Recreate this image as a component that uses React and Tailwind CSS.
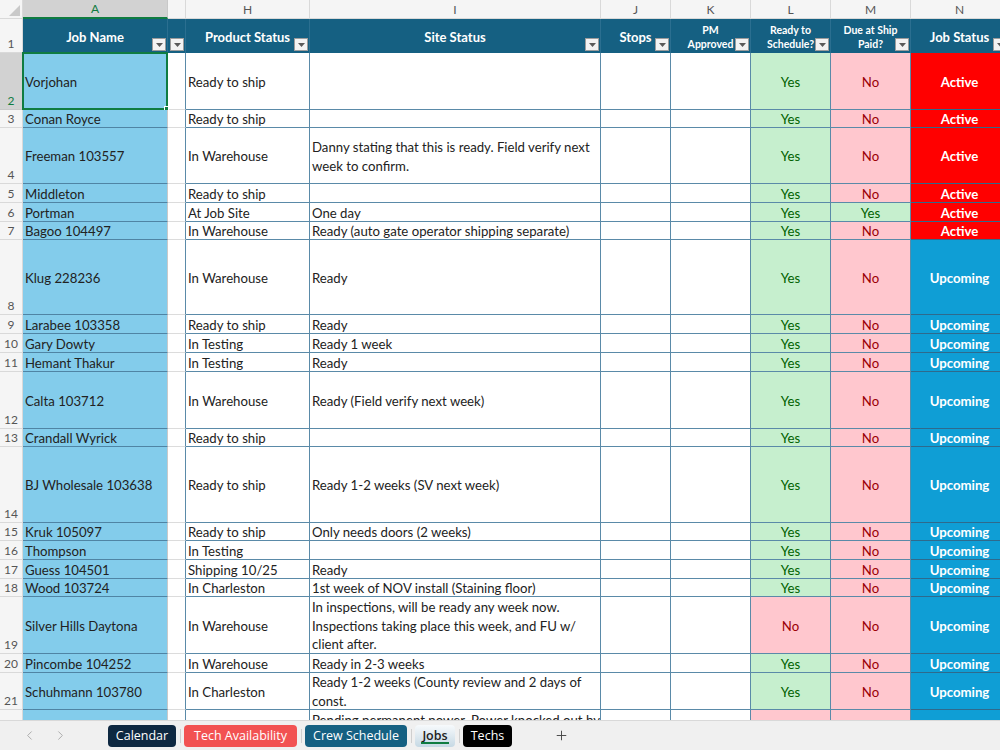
import { ChevronLeft, ChevronRight, Plus } from 'lucide-react';

// column template: row numbers, A, G (narrow), H, I, J, K, L, M, N
const GRID = 'grid grid-rows-[minmax(0,1fr)] grid-cols-[23px_145px_18px_124px_291px_70px_80px_80px_80px_98px]';

const rows = [
  { n: 2, h: 'h-[57px]', name: 'Vorjohan', prod: 'Ready to ship', site: [], ready: 'Yes', paid: 'No', status: 'Active' },
  { n: 3, h: 'h-[18px]', name: 'Conan Royce', prod: 'Ready to ship', site: [], ready: 'Yes', paid: 'No', status: 'Active' },
  {
    n: 4, h: 'h-[56px]', name: 'Freeman 103557', prod: 'In Warehouse',
    site: ['Danny stating that this is ready. Field verify next', 'week to confirm.'],
    ready: 'Yes', paid: 'No', status: 'Active',
  },
  { n: 5, h: 'h-[19px]', name: 'Middleton', prod: 'Ready to ship', site: [], ready: 'Yes', paid: 'No', status: 'Active' },
  { n: 6, h: 'h-[19px]', name: 'Portman', prod: 'At Job Site', site: ['One day'], ready: 'Yes', paid: 'Yes', status: 'Active' },
  { n: 7, h: 'h-[18px]', name: 'Bagoo 104497', prod: 'In Warehouse', site: ['Ready (auto gate operator shipping separate)'], ready: 'Yes', paid: 'No', status: 'Active' },
  { n: 8, h: 'h-[75px]', name: 'Klug 228236', prod: 'In Warehouse', site: ['Ready'], ready: 'Yes', paid: 'No', status: 'Upcoming' },
  { n: 9, h: 'h-[19px]', name: 'Larabee 103358', prod: 'Ready to ship', site: ['Ready'], ready: 'Yes', paid: 'No', status: 'Upcoming' },
  { n: 10, h: 'h-[19px]', name: 'Gary Dowty', prod: 'In Testing', site: ['Ready 1 week'], ready: 'Yes', paid: 'No', status: 'Upcoming' },
  { n: 11, h: 'h-[19px]', name: 'Hemant Thakur', prod: 'In Testing', site: ['Ready'], ready: 'Yes', paid: 'No', status: 'Upcoming' },
  { n: 12, h: 'h-[57px]', name: 'Calta 103712', prod: 'In Warehouse', site: ['Ready (Field verify next week)'], ready: 'Yes', paid: 'No', status: 'Upcoming' },
  { n: 13, h: 'h-[18px]', name: 'Crandall Wyrick', prod: 'Ready to ship', site: [], ready: 'Yes', paid: 'No', status: 'Upcoming' },
  { n: 14, h: 'h-[76px]', name: 'BJ Wholesale 103638', prod: 'Ready to ship', site: ['Ready 1-2 weeks (SV next week)'], ready: 'Yes', paid: 'No', status: 'Upcoming' },
  { n: 15, h: 'h-[18px]', name: 'Kruk 105097', prod: 'Ready to ship', site: ['Only needs doors (2 weeks)'], ready: 'Yes', paid: 'No', status: 'Upcoming' },
  { n: 16, h: 'h-[19px]', name: 'Thompson', prod: 'In Testing', site: [], ready: 'Yes', paid: 'No', status: 'Upcoming' },
  { n: 17, h: 'h-[19px]', name: 'Guess 104501', prod: 'Shipping 10/25', site: ['Ready'], ready: 'Yes', paid: 'No', status: 'Upcoming' },
  { n: 18, h: 'h-[18px]', name: 'Wood 103724', prod: 'In Charleston', site: ['1st week of NOV install (Staining floor)'], ready: 'Yes', paid: 'No', status: 'Upcoming' },
  {
    n: 19, h: 'h-[57px]', name: 'Silver Hills Daytona', prod: 'In Warehouse',
    site: ['In inspections, will be ready any week now.', 'Inspections taking place this week, and FU w/', 'client after.'],
    ready: 'No', paid: 'No', status: 'Upcoming',
  },
  { n: 20, h: 'h-[19px]', name: 'Pincombe 104252', prod: 'In Warehouse', site: ['Ready in 2-3 weeks'], ready: 'Yes', paid: 'No', status: 'Upcoming' },
  {
    n: 21, h: 'h-[37px]', name: 'Schuhmann 103780', prod: 'In Charleston',
    site: ['Ready 1-2 weeks (County review and 2 days of', 'const.'],
    ready: 'Yes', paid: 'No', status: 'Upcoming',
  },
  {
    n: 22, h: 'h-[75px]', name: '', prod: '', top: true,
    site: ['Pending permanent power. Power knocked out by'],
    ready: 'No', paid: '', status: 'Upcoming', blank: true,
  },
];

function FilterButton() {
  return (
    <div className="absolute right-[1px] bottom-[2px] w-[14px] h-[13px] bg-[#f3f3f3] border border-[#9c9c9c] flex items-center justify-center">
      <svg width="7" height="4" viewBox="0 0 7 4">
        <path d="M0 0h7L3.5 4z" fill="#5a5a5a" />
      </svg>
    </div>
  );
}

function ColLetter({ label, active }) {
  return (
    <div
      className={
        active
          ? 'h-[19px] flex items-center justify-center bg-[#d2d2d2] text-[#107c41] border-r border-[#c8c8c8] border-b-2 border-b-[#107c41]'
          : 'h-[19px] flex items-center justify-center bg-[#f5f5f5] text-[#555] border-r border-b border-[#d9d9d9]'
      }
    >
      {label}
    </div>
  );
}

function HeadCell({ children, small }) {
  return (
    <div
      className={
        small
          ? 'relative h-[34px] pt-[1px] bg-[#156082] text-white font-bold text-[10.5px] leading-[14px] flex flex-col items-center justify-center text-center border-r border-[#2b6f90]'
          : 'relative h-[34px] pt-[3px] bg-[#156082] text-white font-bold text-[13px] flex items-center justify-center border-r border-[#2b6f90]'
      }
    >
      {children}
      <FilterButton />
    </div>
  );
}

function Flag({ value }) {
  if (value === 'Yes') {
    return <div className="flex items-center justify-center pt-[2px] bg-[#c6efce] text-[#006100] border-r border-b border-[#5a8aa8]">Yes</div>;
  }
  if (value === 'No') {
    return <div className="flex items-center justify-center pt-[2px] bg-[#ffc7ce] text-[#9c0006] border-r border-b border-[#5a8aa8]">No</div>;
  }
  return <div className="bg-[#ffc7ce] border-r border-b border-[#5a8aa8]" />;
}

function StatusCell({ value, blank }) {
  const tone = value === 'Active' ? 'bg-[#ff0000]' : 'bg-[#0f9ed5]';
  return (
    <div className={`flex items-center justify-center pt-[2px] text-white font-bold border-r border-b border-[#2f6a8c] ${tone}`}>
      {blank ? '' : value}
    </div>
  );
}

function DataRow({ row }) {
  const selected = row.n === 2;
  return (
    <div className={`${GRID} ${row.h}`}>
      <div
        className={
          selected
            ? 'flex items-end justify-center bg-[#d2d2d2] text-[#107c41] text-[12px] border-r border-b border-[#c8c8c8] overflow-hidden'
            : 'flex items-end justify-center bg-[#f5f5f5] text-[#555] text-[12px] border-r border-b border-[#d9d9d9] overflow-hidden'
        }
      >
        {row.blank ? '' : row.n}
      </div>
      <div className="relative flex items-center pl-[2px] pt-[2px] bg-[#83cceb] border-r border-r-[#c9c9c9] border-b border-b-[#4f84a4] whitespace-nowrap">
        {row.name}
        {selected && (
          <div className="absolute -inset-[1px] border-2 border-[#107c41]">
            <div className="absolute -right-[3px] -bottom-[3px] w-[5px] h-[5px] bg-[#107c41] border border-white" />
          </div>
        )}
      </div>
      <div className="bg-white border-r border-r-[#5a8aa8] border-b border-b-[#dcdcdc]" />
      <div className="flex items-center pl-[2px] pt-[2px] bg-white border-r border-b border-[#5a8aa8] whitespace-nowrap overflow-hidden">{row.prod}</div>
      <div
        className={`flex flex-col pl-[2px] bg-white border-r border-b border-[#5a8aa8] whitespace-nowrap leading-[18.7px] overflow-hidden ${
          row.top ? 'justify-start pt-[1px]' : 'justify-center pt-[2px]'
        }`}
      >
        {row.site.map((line) => (
          <span key={line}>{line}</span>
        ))}
      </div>
      <div className="bg-white border-r border-b border-[#5a8aa8]" />
      <div className="bg-white border-r border-b border-[#5a8aa8]" />
      <Flag value={row.blank ? '' : row.ready} />
      <Flag value={row.paid} />
      <StatusCell value={row.status} blank={row.blank} />
    </div>
  );
}

function SheetTab({ label, className, active }) {
  return (
    <div className={`relative h-[22px] rounded-[4px] flex items-center justify-center ${className}`}>
      {label}
      {active && <div className="absolute bottom-[3px] left-1/2 -translate-x-1/2 w-[28px] h-[2px] bg-[#107c41]" />}
    </div>
  );
}

function Divider() {
  return <div className="ml-[4px] mr-[3px] w-px h-[14px] bg-[#cfcfcf]" />;
}

export default function App() {
  return (
    <div className="w-[1000px] h-[750px] flex flex-col overflow-hidden bg-white font-['Lato',sans-serif] text-[13.2px] leading-[17px] text-[#222]">
      <div className="flex-1 overflow-hidden">
        {/* column letters */}
        <div className={`${GRID} h-[19px] text-[12px]`}>
          <div className="relative h-[19px] bg-[#f5f5f5] border-r border-b border-[#d9d9d9]">
            <div className="absolute right-[2px] bottom-[2px] w-0 h-0 border-l-[11px] border-l-transparent border-b-[11px] border-b-[#c9c9c9]" />
          </div>
          <ColLetter label="A" active />
          <ColLetter label="" />
          <ColLetter label="H" />
          <ColLetter label="I" />
          <ColLetter label="J" />
          <ColLetter label="K" />
          <ColLetter label="L" />
          <ColLetter label="M" />
          <ColLetter label="N" />
        </div>

        {/* table header row */}
        <div className={`${GRID} h-[34px]`}>
          <div className="h-[34px] flex items-end justify-center bg-[#f5f5f5] text-[#555] text-[12px] border-r border-b border-[#d9d9d9]">1</div>
          <HeadCell>Job Name</HeadCell>
          <HeadCell />
          <HeadCell>Product Status</HeadCell>
          <HeadCell>Site Status</HeadCell>
          <HeadCell>Stops</HeadCell>
          <HeadCell small>
            <span>PM</span>
            <span>Approved</span>
          </HeadCell>
          <HeadCell small>
            <span>Ready to</span>
            <span>Schedule?</span>
          </HeadCell>
          <HeadCell small>
            <span>Due at Ship</span>
            <span>Paid?</span>
          </HeadCell>
          <HeadCell>Job Status</HeadCell>
        </div>

        {rows.map((row) => (
          <DataRow key={row.n} row={row} />
        ))}
      </div>

      {/* sheet tabs */}
      <div className="h-[30px] shrink-0 flex items-center bg-[#f0f0f0] border-t border-[#d9d9d9] font-['Open_Sans',sans-serif] text-[12.5px]">
        <div className="w-[108px] flex items-center pl-[22px] gap-[16px] text-[#a8a8a8]">
          <ChevronLeft size={15} strokeWidth={1.5} />
          <ChevronRight size={15} strokeWidth={1.5} />
        </div>
        <SheetTab label="Calendar" className="w-[68px] bg-[#0e2841] text-white" />
        <Divider />
        <SheetTab label="Tech Availability" className="w-[113px] bg-[#f25252] text-white" />
        <Divider />
        <SheetTab label="Crew Schedule" className="w-[102px] bg-[#156082] text-white" />
        <Divider />
        <SheetTab label="Jobs" active className="w-[40px] bg-gradient-to-b from-[#f7fafc] to-[#c6d9e4] text-[#222] font-semibold" />
        <Divider />
        <SheetTab label="Techs" className="w-[49px] bg-black text-white" />
        <div className="ml-[42px] text-[#444]">
          <Plus size={15} strokeWidth={1.5} />
        </div>
      </div>
    </div>
  );
}
